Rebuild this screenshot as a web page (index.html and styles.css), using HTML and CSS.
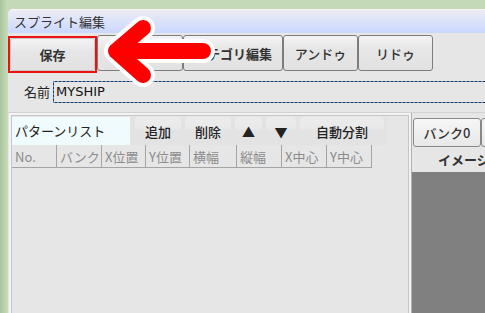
FILE: index.html
```html
<!DOCTYPE html>
<html>
  <head>
    <title>スプライト編集</title>
    <link rel="stylesheet" href="styles.css">
  </head>
  <body>
    <div class="window">
      <div class="titlebar">スプライト編集</div>

      <div class="toolbar">
        <div class="highlight"><button class="tool">保存</button></div>
        <button class="tool w86">読込</button>
        <button class="tool w100">カテゴリ編集</button>
        <button class="tool w75">アンドゥ</button>
        <button class="tool w75">リドゥ</button>
      </div>

      <div class="namerow">
        <span class="label">名前</span>
        <div class="field">MYSHIP</div>
      </div>

      <div class="panels">
        <div class="left">
          <div class="inner">
            <div class="tabrow">
              <div class="tab">パターンリスト</div>
              <div class="actions">
                <span class="flat w46">追加</span>
                <span class="flat w46">削除</span>
                <span class="flat w28">▲</span>
                <span class="flat w30">▼</span>
                <span class="flat w84">自動分割</span>
              </div>
            </div>
            <div class="header">
              <span class="col w45">No.</span>
              <span class="col w45">バンク</span>
              <span class="col w44">X位置</span>
              <span class="col w44">Y位置</span>
              <span class="col w47">横幅</span>
              <span class="col w45">縦幅</span>
              <span class="col w45">X中心</span>
              <span class="col w45">Y中心</span>
            </div>
            <div class="list"></div>
          </div>
        </div>
        <div class="right">
          <div class="banks">
            <button class="bank">バンク0</button>
            <button class="bank"></button>
          </div>
          <div class="imglabel">イメージ</div>
          <div class="canvas"></div>
        </div>
      </div>
    </div>

    <svg class="arrow" width="485" height="313" viewBox="0 0 485 313">
      <g fill="none" stroke-linecap="round" stroke-linejoin="round">
        <path d="M203 51 H116 M143 28 L116 51 L143 75" stroke="#ffffff" stroke-width="24"/>
        <path d="M203 51 H116 M143 28 L116 51 L143 75" stroke="#ff0000" stroke-width="16"/>
      </g>
    </svg>
  </body>
</html>
```

FILE: styles.css
```css
body {
  margin: 0;
  background: linear-gradient(90deg, #a9c59b, #c3d9b8 7px);
  font-family: "DejaVu Sans", "Noto Sans CJK JP", sans-serif;
  font-size: 13px;
  color: #222;
  overflow: hidden;
  height: 313px;
}
.window {
  margin: 9px 0 0 8px;
  height: 304px;
  background: #e6e6e6;
  border-top-left-radius: 5px;
  overflow: hidden;
}
.titlebar {
  height: 24px;
  line-height: 24px;
  padding-left: 6px;
  border-top: 1px solid #f6f6f6;
  box-sizing: border-box;
  background: linear-gradient(#ececf2, #cbd8ff);
  font-family: "Noto Sans CJK JP", sans-serif;
  font-size: 13px;
  color: #333;
}
.toolbar {
  display: flex;
  height: 40px;
  align-items: flex-start;
  padding-top: 2px;
  box-sizing: border-box;
}
.tool {
  height: 36px;
  margin: 0;
  padding: 0;
  border: 1px solid #7c7c7c;
  border-radius: 3px;
  background: linear-gradient(#f4f4f4, #e6e6e6 40%, #e2e2e2);
  font-family: "Noto Sans CJK JP", sans-serif;
  font-size: 13px;
  font-weight: bold;
  color: #333;
}
.highlight {
  border: 2px solid #ee1111;
  width: 85px;
  height: 33px;
  margin-top: 1px;
  display: flex;
}
.highlight .tool {
  width: 85px;
  height: 33px;
  border-color: #c8c8c8;
}
.w86 { width: 86px; }
.w100 { width: 100px; }
.w75 { width: 75px; font-weight: 500; }
.namerow {
  display: flex;
  align-items: center;
  height: 37px;
}
.label {
  font-family: "Noto Sans CJK JP", sans-serif;
  font-size: 13px;
  margin-left: 16px;
  width: 29px;
}
.field {
  flex: 1;
  height: 22px;
  line-height: 22px;
  padding-left: 3px;
  font-size: 13px;
  color: #111;
  background:
    repeating-linear-gradient(90deg, #4a8fe6 0 2px, #333 2px 4px) top left / 100% 1px no-repeat,
    repeating-linear-gradient(90deg, #4a8fe6 0 2px, #333 2px 4px) bottom left / 100% 1px no-repeat,
    repeating-linear-gradient(#4a8fe6 0 2px, #333 2px 4px) top left / 1px 100% no-repeat;
}
.panels {
  display: flex;
  border-top: 1px solid #d2d2d2;
  margin-top: 2px;
  height: 200px;
}
.left {
  width: 398px;
  flex-shrink: 0;
  margin-left: 1px;
  border-left: 2px solid #f3f3f3;
  border-top: 2px solid #f3f3f3;
  border-right: 2px solid #f3f3f3;
}
.inner {
  height: 100%;
  border-left: 1px solid #c6c6c6;
  border-top: 1px solid #c6c6c6;
  border-right: 1px solid #c6c6c6;
}
.tabrow {
  display: flex;
  height: 28px;
  margin-top: 1px;
}
.tab {
  width: 115px;
  padding-left: 3px;
  line-height: 28px;
  background: #f0fbfd;
  font-family: "Noto Sans CJK JP", sans-serif;
  font-size: 13px;
  color: #222;
}
.actions {
  display: flex;
  align-items: stretch;
  padding-left: 5px;
  gap: 4px;
  width: 252px;
  background: #e3e3e3;
}
.flat {
  display: flex;
  align-items: center;
  justify-content: center;
  border-radius: 4px;
  background: linear-gradient(#ececec, #e9e9e9 40%, #e3e3e3 50%);
  font-family: "Noto Sans CJK JP", sans-serif;
  font-size: 13px;
  font-weight: 500;
  color: #222;
}
.w46 { width: 46px; }
.w28 { width: 27px; }
.w30 { width: 30px; }
.w84 { width: 84px; }
.header {
  display: flex;
  height: 24px;
}
.col {
  height: 23px;
  line-height: 23px;
  padding-left: 3px;
  box-sizing: border-box;
  border-right: 1px solid #a4a4a4;
  border-bottom: 1px solid #a4a4a4;
  font-family: "Noto Sans CJK JP", sans-serif;
  font-size: 13px;
  color: #8c8c8c;
  white-space: nowrap;
  overflow: hidden;
}
.w45 { width: 45px; }
.w44 { width: 44px; }
.w47 { width: 47px; }
.list {
  flex: 1;
}
.right {
  flex: 1;
  min-width: 0;
  overflow: hidden;
  display: flex;
  flex-direction: column;
  padding-top: 5px;
  border-left: 1px solid #b0b0b0;
}
.banks {
  display: flex;
  padding-left: 1px;
}
.bank {
  width: 68px;
  height: 29px;
  margin: 0;
  flex-shrink: 0;
  border: 1px solid #888;
  border-radius: 3px;
  background: linear-gradient(#f6f6f6, #e8e8e8);
  font-family: "Noto Sans CJK JP", sans-serif;
  font-size: 13px;
  font-weight: 500;
  color: #333;
}
.imglabel {
  height: 25px;
  line-height: 25px;
  padding-left: 26px;
  font-family: "Noto Sans CJK JP", sans-serif;
  font-size: 13px;
  font-weight: bold;
  color: #333;
  white-space: nowrap;
}
.canvas {
  flex: 1;
  background: #808080;
}
.arrow {
  position: absolute;
  left: 0;
  top: 0;
}
```
